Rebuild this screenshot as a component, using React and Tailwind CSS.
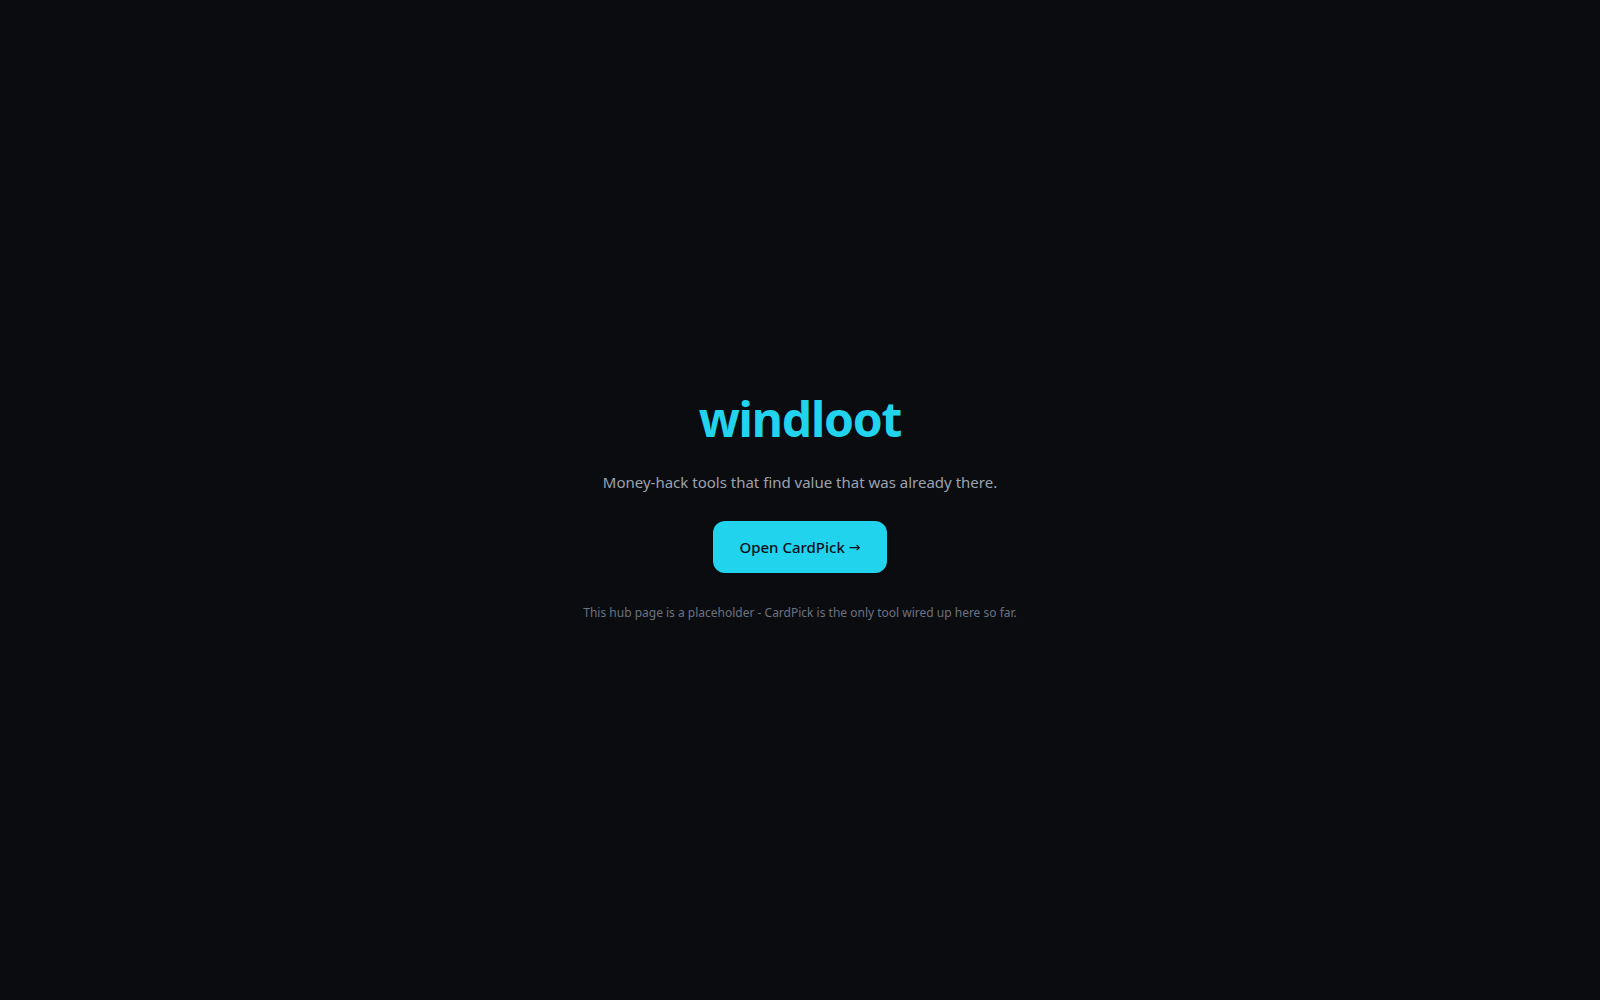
import React from 'react';

const FONT = { fontFamily: '"Segoe UI", "Noto Sans", "Open Sans", sans-serif' };

export default function App() {
  return (
    <div
      className="flex min-h-screen w-full items-center justify-center bg-[#0b0c10] px-6 pt-4 text-center"
      style={FONT}
    >
      <main className="flex flex-col items-center">
        <h1 className="text-5xl font-bold leading-none tracking-tight text-[#22d3ee]">windloot</h1>
        <p className="mt-7 text-[15px] leading-[22px] text-[#9ca3af]">
          Money-hack tools that find value that was already there.
        </p>
        <a
          href="#"
          className="mt-7 inline-flex h-[52px] w-[174px] items-center justify-center gap-1 rounded-xl bg-[#22d3ee] text-[15px] font-medium text-[#0b0f19]"
        >
          Open CardPick
          <span className="font-['DejaVu_Sans',sans-serif] text-[14px] font-normal">→</span>
        </a>
        <p className="mt-8 text-xs text-[#6b7280]">
          This hub page is a placeholder - CardPick is the only tool wired up here so far.
        </p>
      </main>
    </div>
  );
}
